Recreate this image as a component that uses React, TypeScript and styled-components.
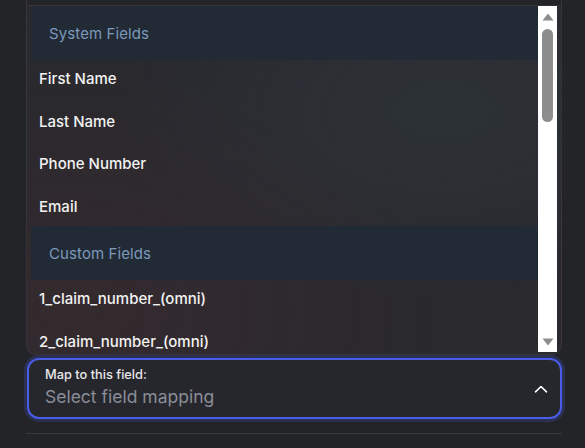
import styled, { createGlobalStyle } from "styled-components";

const GlobalStyle = createGlobalStyle`
  html, body {
    margin: 0;
    padding: 0;
    background: #232428;
    font-family: Inter, "Noto Sans", sans-serif;
  }
`;

const Page = styled.div`
  display: flex;
  flex-direction: column;
  width: 536px;
  margin-left: 26px;
  height: 448px;
`;

const TopEdge = styled.div`
  flex: none;
  height: 5px;
  border-left: 1px solid #36383e;
  border-right: 1px solid #36383e;
`;

const Dropdown = styled.div`
  flex: none;
  display: flex;
  height: 350px;
  box-sizing: border-box;
  padding: 0 4px 2px 4px;
  border: 1px solid rgba(255, 255, 255, 0.05);
  border-radius: 0 0 10px 10px;
  background:
    radial-gradient(ellipse at 78% 30%, rgba(55, 75, 82, 0.26), transparent 55%),
    radial-gradient(ellipse at 8% 88%, rgba(85, 45, 45, 0.26), transparent 55%),
    #29292e;
  overflow: hidden;
`;

const List = styled.div`
  flex: 1;
  overflow: hidden;
  display: flex;
  flex-direction: column;
`;

const GroupHeader = styled.div`
  flex: none;
  height: 54px;
  display: flex;
  align-items: center;
  padding-left: 18px;
  background: #222a35;
  color: #7b99bb;
  font-size: 15px;
  letter-spacing: 0.1px;
`;

const Option = styled.div`
  flex: none;
  height: 38.5px;
  display: flex;
  align-items: center;
  padding-left: 8px;
  color: #f2f2f2;
  font-size: 15px;
  font-weight: 500;
  line-height: 20px;

  & + & {
    margin-top: 4px;
  }
`;

const ScrollBar = styled.div`
  flex: none;
  width: 19px;
  display: flex;
  flex-direction: column;
  align-items: center;
  padding: 7px 0 6px;
  background: #ffffff;
`;

const Thumb = styled.div`
  width: 11px;
  height: 93px;
  margin-top: 8px;
  border-radius: 6px;
  background: #8d8d8d;
`;

const Spacer = styled.div`
  flex: 1;
`;

const Select = styled.div`
  flex: none;
  display: flex;
  align-items: center;
  height: 61px;
  box-sizing: border-box;
  margin: 3px 0 0 1px;
  padding: 0 12px 0 16px;
  border: 2px solid #4a5de6;
  border-radius: 12px;
  background: #26272d;
  box-shadow: 0 0 0 3px rgba(74, 93, 230, 0.22);
`;

const SelectText = styled.div`
  flex: 1;
  display: flex;
  flex-direction: column;
  gap: 3px;
  padding-bottom: 2px;
`;

const Label = styled.div`
  color: #e8e8ea;
  font-size: 12.8px;
  font-weight: 500;
  line-height: 16px;
`;

const Placeholder = styled.div`
  color: #8b8e97;
  font-size: 17.5px;
  line-height: 22px;
`;

const Divider = styled.div`
  flex: none;
  margin-top: 14px;
  height: 1px;
  background: #393a40;
`;

const Arrow = ({ down }: { down?: boolean }) => (
  <svg width="12" height="8" viewBox="0 0 12 8">
    <path d={down ? "M0.5 0.5 H11.5 L6 7.5 Z" : "M6 0.5 L11.5 7.5 H0.5 Z"} fill="#8d8d8d" />
  </svg>
);

const systemFields = ["First Name", "Last Name", "Phone Number", "Email"];
const customFields = ["1_claim_number_(omni)", "2_claim_number_(omni)"];

export default function App() {
  return (
    <>
      <GlobalStyle />
      <Page>
        <TopEdge />
        <Dropdown>
          <List>
            <GroupHeader>System Fields</GroupHeader>
            {systemFields.map((f) => (
              <Option key={f}>{f}</Option>
            ))}
            <GroupHeader>Custom Fields</GroupHeader>
            {customFields.map((f) => (
              <Option key={f}>{f}</Option>
            ))}
          </List>
          <ScrollBar>
            <Arrow />
            <Thumb />
            <Spacer />
            <Arrow down />
          </ScrollBar>
        </Dropdown>
        <Select>
          <SelectText>
            <Label>Map to this field:</Label>
            <Placeholder>Select field mapping</Placeholder>
          </SelectText>
          <svg width="14" height="8" viewBox="0 0 14 8">
            <path d="M1.5 6.8 L7 1.5 L12.5 6.8" fill="none" stroke="#ffffff" strokeWidth="1.6" strokeLinecap="round" strokeLinejoin="round" />
          </svg>
        </Select>
        <Divider />
      </Page>
    </>
  );
}
